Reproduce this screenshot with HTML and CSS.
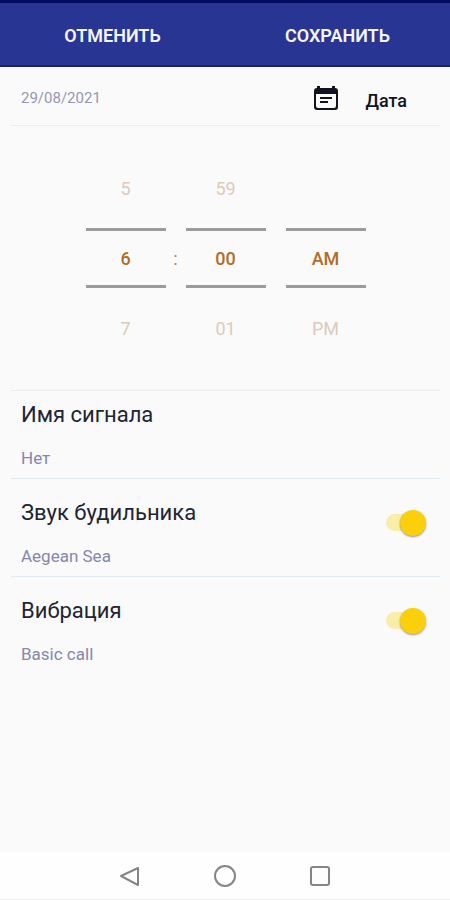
FILE: index.html
```html
<!DOCTYPE html>
<html lang="ru">
<head>
<meta charset="utf-8">
<meta name="viewport" content="width=device-width, initial-scale=1">
<title>Будильник</title>
<link rel="stylesheet" href="styles.css">
</head>
<body>
<header class="actions">
  <button type="button" class="action">ОТМЕНИТЬ</button>
  <button type="button" class="action">СОХРАНИТЬ</button>
</header>
<main class="content">
  <section class="date-row">
    <span class="date">29/08/2021</span>
    <button type="button" class="date-button">
      <svg class="calendar" viewBox="0 0 26 26" aria-hidden="true">
        <path fill="currentColor" fill-rule="evenodd" d="M4 3H4V1H7V3H19V1H22V3H22Q25 3 25 6V22Q25 25 22 25H4Q1 25 1 22V6Q1 3 4 3ZM3 9V21Q3 23 5 23H21Q23 23 23 21V9Z"/>
        <path fill="none" stroke="currentColor" stroke-width="2" d="M7 13H19M7 17H15"/>
      </svg>
      <span class="date-label">Дата</span>
    </button>
  </section>
  <section class="picker">
    <div class="wheel">
      <button type="button" class="option">5</button>
      <button type="button" class="option selected">6</button>
      <button type="button" class="option">7</button>
    </div>
    <span class="colon">:</span>
    <div class="wheel">
      <button type="button" class="option">59</button>
      <button type="button" class="option selected">00</button>
      <button type="button" class="option">01</button>
    </div>
    <div class="wheel period">
      <span class="option"></span>
      <button type="button" class="option selected">AM</button>
      <button type="button" class="option">PM</button>
    </div>
  </section>
  <section class="setting compact">
    <div class="labels">
      <h2 class="title">Имя сигнала</h2>
      <p class="value">Нет</p>
    </div>
  </section>
  <section class="setting">
    <div class="labels">
      <label class="title" for="sound">Звук будильника</label>
      <p class="value">Aegean Sea</p>
    </div>
    <input class="switch" type="checkbox" role="switch" id="sound" checked>
  </section>
  <section class="setting">
    <div class="labels">
      <label class="title" for="vibration">Вибрация</label>
      <p class="value">Basic call</p>
    </div>
    <input class="switch" type="checkbox" role="switch" id="vibration" checked>
  </section>
</main>
<nav class="system-bar">
  <button type="button" class="nav-button" aria-label="Назад">
    <svg viewBox="0 0 24 24"><path d="M20 4V21L3 12Z"/></svg>
  </button>
  <button type="button" class="nav-button" aria-label="Домой">
    <svg viewBox="0 0 24 24"><circle cx="12" cy="12" r="10"/></svg>
  </button>
  <button type="button" class="nav-button" aria-label="Недавние">
    <svg viewBox="0 0 24 24"><rect x="3" y="3" width="18" height="18" rx="2"/></svg>
  </button>
</nav>
</body>
</html>
```
FILE: styles.css
```css
* {
  box-sizing: border-box;
}

body {
  margin: 0;
  min-height: 100vh;
  display: flex;
  flex-direction: column;
  background: #fafafa;
  color: #1c2030;
  font-family: Roboto, "Liberation Sans", sans-serif;
}

button {
  padding: 0;
  border: 0;
  background: none;
  color: inherit;
  font: inherit;
}

.actions {
  display: grid;
  grid-template-columns: 1fr 1fr;
  border-top: 3px solid #020c60;
  border-bottom: 2px solid #14217a;
  background: #283593;
}

.action {
  height: 62px;
  padding-top: 2px;
  color: #f4f5ff;
  font-size: 18px;
  font-weight: 600;
}

.content {
  flex: 1;
  padding: 0 10px 0 11px;
}

.date-row {
  display: flex;
  align-items: center;
  justify-content: space-between;
  height: 59px;
  padding: 4px 33px 0 10px;
  border-bottom: 1px solid #e6edf2;
}

.date {
  color: #9696b4;
  font-size: 15px;
}

.date-button {
  display: flex;
  align-items: center;
  gap: 26px;
  color: #10141f;
  font-size: 18px;
  font-weight: 500;
}

.date-label {
  padding-top: 4px;
}

.calendar {
  width: 26px;
  height: 26px;
}

.picker {
  display: grid;
  grid-template-columns: 80px 20px 80px 80px;
  align-items: center;
  justify-content: center;
  height: 265px;
  padding-right: 20px;
  border-bottom: 1px solid #e9edf0;
}

.wheel {
  display: flex;
  flex-direction: column;
  align-items: stretch;
  gap: 10px;
}

.period {
  margin-left: 20px;
  margin-right: -20px;
}

.option {
  height: 60px;
  color: #dccabb;
  font-size: 18px;
}

.selected {
  border-top: 3px solid #9b9b9b;
  border-bottom: 3px solid #9b9b9b;
  color: #b06d2a;
  font-weight: 500;
}

.colon {
  color: #8c8c8c;
  font-size: 18px;
  text-align: center;
}

.setting {
  display: flex;
  align-items: center;
  justify-content: space-between;
  padding: 20px 14px 10px 10px;
}

.compact {
  padding-top: 10px;
}

.setting:not(:last-child) {
  border-bottom: 1px solid #deebf3;
}

.title {
  display: block;
  margin: 0;
  color: #202433;
  font-size: 22px;
  font-weight: 400;
  line-height: 28px;
}

.value {
  margin: 19px 0 0;
  color: #8587ac;
  font-size: 17px;
  line-height: 20px;
}

.switch {
  appearance: none;
  display: flex;
  align-items: center;
  justify-content: flex-end;
  width: 40px;
  height: 17px;
  margin: 0 0 20px;
  border-radius: 9px;
  background: #f9edaa;
}

.switch::before {
  content: "";
  width: 26px;
  height: 26px;
  flex: none;
  border-radius: 50%;
  background: #fbd00b;
  box-shadow: 0 1px 2px #00000066;
}

.switch:not(:checked) {
  justify-content: flex-start;
  background: #cccccc;
}

.system-bar {
  display: flex;
  align-items: center;
  justify-content: center;
  gap: 71px;
  height: 48px;
  border-bottom: 1px solid #eeeeee;
  background: #fefefe;
}

.nav-button {
  width: 24px;
  height: 24px;
}

.nav-button svg {
  display: block;
  fill: none;
  stroke: #858585;
  stroke-width: 2;
  stroke-linejoin: round;
}
```
